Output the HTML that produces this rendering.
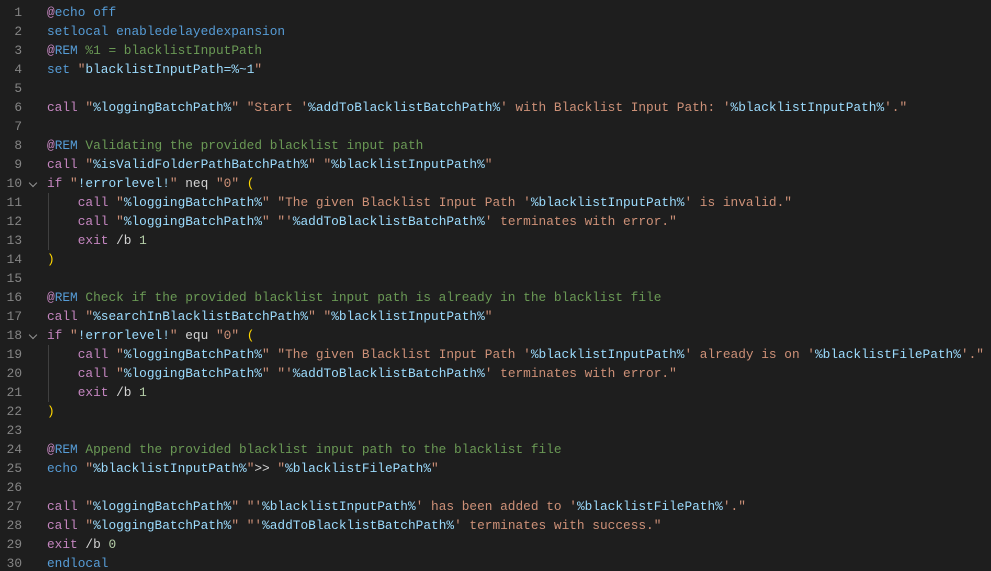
<!DOCTYPE html>
<html><head><meta charset="utf-8"><style>
html,body{margin:0;padding:0;background:#1e1e1e;width:991px;height:571px;overflow:hidden}
.ed{position:relative;padding-top:3px;font-family:"Liberation Mono",monospace;font-size:12.8px;}
.l{height:19px;line-height:19px;white-space:pre;position:relative;color:#d4d4d4}
.ln{position:absolute;left:0;width:22px;text-align:right;color:#858585}
.code{position:absolute;left:47px}
.f{position:absolute;left:30px;top:6px;width:5px;height:5px;border-right:1px solid #c5c5c5;border-bottom:1px solid #c5c5c5;transform:rotate(45deg);opacity:.7}
.g{position:absolute;left:48px;width:1px;background:#404040}
.k{color:#c586c0}.b{color:#569cd6}.s{color:#ce9178}.v{color:#9cdcfe}.c{color:#6a9955}.n{color:#b5cea8}.p{color:#ffd700}
</style></head><body><div class="ed">
<div class="g" style="top:193px;height:57px"></div>
<div class="g" style="top:345px;height:57px"></div>
<div class="l"><span class="ln">1</span><span class="code"><span class="k">@</span><span class="b">echo off</span></span></div>
<div class="l"><span class="ln">2</span><span class="code"><span class="b">setlocal enabledelayedexpansion</span></span></div>
<div class="l"><span class="ln">3</span><span class="code"><span class="k">@</span><span class="b">REM</span><span class="c"> %1 = blacklistInputPath</span></span></div>
<div class="l"><span class="ln">4</span><span class="code"><span class="b">set</span> <span class="s">"</span><span class="v">blacklistInputPath=%~1</span><span class="s">"</span></span></div>
<div class="l"><span class="ln">5</span></div>
<div class="l"><span class="ln">6</span><span class="code"><span class="k">call</span> <span class="s">"</span><span class="v">%loggingBatchPath%</span><span class="s">"</span> <span class="s">"Start '</span><span class="v">%addToBlacklistBatchPath%</span><span class="s">' with Blacklist Input Path: '</span><span class="v">%blacklistInputPath%</span><span class="s">'."</span></span></div>
<div class="l"><span class="ln">7</span></div>
<div class="l"><span class="ln">8</span><span class="code"><span class="k">@</span><span class="b">REM</span><span class="c"> Validating the provided blacklist input path</span></span></div>
<div class="l"><span class="ln">9</span><span class="code"><span class="k">call</span> <span class="s">"</span><span class="v">%isValidFolderPathBatchPath%</span><span class="s">"</span> <span class="s">"</span><span class="v">%blacklistInputPath%</span><span class="s">"</span></span></div>
<div class="l"><span class="ln">10</span><span class="f"></span><span class="code"><span class="k">if</span> <span class="s">"</span><span class="v">!errorlevel!</span><span class="s">"</span> neq <span class="s">"0"</span> <span class="p">(</span></span></div>
<div class="l"><span class="ln">11</span><span class="code">    <span class="k">call</span> <span class="s">"</span><span class="v">%loggingBatchPath%</span><span class="s">"</span> <span class="s">"The given Blacklist Input Path '</span><span class="v">%blacklistInputPath%</span><span class="s">' is invalid."</span></span></div>
<div class="l"><span class="ln">12</span><span class="code">    <span class="k">call</span> <span class="s">"</span><span class="v">%loggingBatchPath%</span><span class="s">"</span> <span class="s">"'</span><span class="v">%addToBlacklistBatchPath%</span><span class="s">' terminates with error."</span></span></div>
<div class="l"><span class="ln">13</span><span class="code">    <span class="k">exit</span> /b <span class="n">1</span></span></div>
<div class="l"><span class="ln">14</span><span class="code"><span class="p">)</span></span></div>
<div class="l"><span class="ln">15</span></div>
<div class="l"><span class="ln">16</span><span class="code"><span class="k">@</span><span class="b">REM</span><span class="c"> Check if the provided blacklist input path is already in the blacklist file</span></span></div>
<div class="l"><span class="ln">17</span><span class="code"><span class="k">call</span> <span class="s">"</span><span class="v">%searchInBlacklistBatchPath%</span><span class="s">"</span> <span class="s">"</span><span class="v">%blacklistInputPath%</span><span class="s">"</span></span></div>
<div class="l"><span class="ln">18</span><span class="f"></span><span class="code"><span class="k">if</span> <span class="s">"</span><span class="v">!errorlevel!</span><span class="s">"</span> equ <span class="s">"0"</span> <span class="p">(</span></span></div>
<div class="l"><span class="ln">19</span><span class="code">    <span class="k">call</span> <span class="s">"</span><span class="v">%loggingBatchPath%</span><span class="s">"</span> <span class="s">"The given Blacklist Input Path '</span><span class="v">%blacklistInputPath%</span><span class="s">' already is on '</span><span class="v">%blacklistFilePath%</span><span class="s">'."</span></span></div>
<div class="l"><span class="ln">20</span><span class="code">    <span class="k">call</span> <span class="s">"</span><span class="v">%loggingBatchPath%</span><span class="s">"</span> <span class="s">"'</span><span class="v">%addToBlacklistBatchPath%</span><span class="s">' terminates with error."</span></span></div>
<div class="l"><span class="ln">21</span><span class="code">    <span class="k">exit</span> /b <span class="n">1</span></span></div>
<div class="l"><span class="ln">22</span><span class="code"><span class="p">)</span></span></div>
<div class="l"><span class="ln">23</span></div>
<div class="l"><span class="ln">24</span><span class="code"><span class="k">@</span><span class="b">REM</span><span class="c"> Append the provided blacklist input path to the blacklist file</span></span></div>
<div class="l"><span class="ln">25</span><span class="code"><span class="b">echo</span> <span class="s">"</span><span class="v">%blacklistInputPath%</span><span class="s">"</span>&gt;&gt; <span class="s">"</span><span class="v">%blacklistFilePath%</span><span class="s">"</span></span></div>
<div class="l"><span class="ln">26</span></div>
<div class="l"><span class="ln">27</span><span class="code"><span class="k">call</span> <span class="s">"</span><span class="v">%loggingBatchPath%</span><span class="s">"</span> <span class="s">"'</span><span class="v">%blacklistInputPath%</span><span class="s">' has been added to '</span><span class="v">%blacklistFilePath%</span><span class="s">'."</span></span></div>
<div class="l"><span class="ln">28</span><span class="code"><span class="k">call</span> <span class="s">"</span><span class="v">%loggingBatchPath%</span><span class="s">"</span> <span class="s">"'</span><span class="v">%addToBlacklistBatchPath%</span><span class="s">' terminates with success."</span></span></div>
<div class="l"><span class="ln">29</span><span class="code"><span class="k">exit</span> /b <span class="n">0</span></span></div>
<div class="l"><span class="ln">30</span><span class="code"><span class="b">endlocal</span></span></div>
</div></body></html>
